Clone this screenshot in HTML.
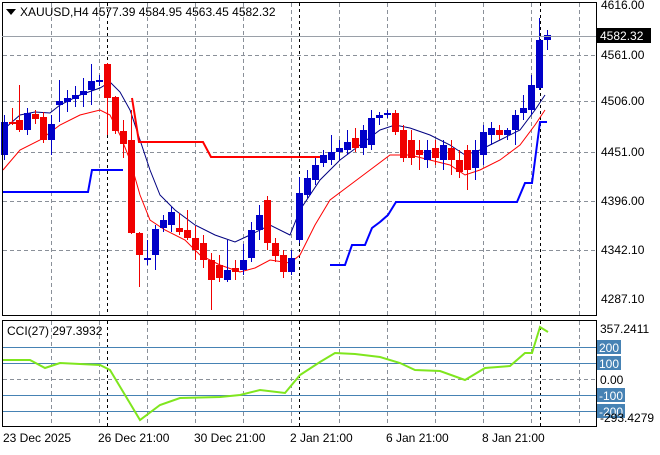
<!DOCTYPE html><html><head><style>
body{margin:0;background:#fff;width:660px;height:450px;overflow:hidden;font-family:"Liberation Sans",sans-serif}
svg text{font-family:"Liberation Sans",sans-serif;font-size:12px;fill:#000}
</style></head><body>
<svg id="s" width="660" height="450" xmlns="http://www.w3.org/2000/svg">
<rect x="0" y="0" width="660" height="450" fill="#fff"/>
<g id="grid" stroke="#8a9099" stroke-dasharray="4,3" stroke-width="1"></g>
<g id="sep" stroke="#000" stroke-dasharray="3,3" stroke-width="1"></g>
<g id="cci"></g>
<g id="main"></g>
<rect x="2.5" y="2.5" width="594" height="313" fill="none" stroke="#000"/>
<rect x="2.5" y="320.5" width="594" height="106" fill="none" stroke="#000"/>
<line x1="2" y1="36.5" x2="596" y2="36.5" stroke="#9aa0a8"/>
<polygon points="6,9 16,9 11,15" fill="#000"/>
<text x="20" y="16">XAUUSD,H4  4577.39 4584.95 4563.45 4582.32</text>
<text x="601" y="9">4616.00</text>
<rect x="597" y="28" width="54" height="15" fill="#000"/><text x="600" y="40" style="fill:#fff">4582.32</text>
<text x="601" y="59">4561.00</text>
<text x="601" y="105">4506.00</text>
<text x="601" y="156">4451.00</text>
<text x="601" y="205">4396.00</text>
<text x="601" y="254">4342.10</text>
<text x="601" y="303">4287.10</text>
<text x="7" y="335">CCI(27) 297.3932</text>
<text x="600" y="333">357.2411</text>
<rect x="597" y="340" width="24" height="14" fill="#4682b4"/><text x="599" y="352" style="fill:#fff">200</text>
<rect x="597" y="356" width="24" height="14" fill="#4682b4"/><text x="599" y="368" style="fill:#fff">100</text>
<text x="600" y="384">0.00</text>
<rect x="597" y="388" width="28" height="14" fill="#4682b4"/><text x="599" y="400" style="fill:#fff">-100</text>
<rect x="597" y="404" width="28" height="14" fill="#4682b4"/><text x="599" y="416" style="fill:#fff">-200</text>
<text x="600" y="422">-293.4279</text>
<text x="3" y="442">23 Dec 2025</text>
<text x="98" y="442">26 Dec 21:00</text>
<text x="194" y="442">30 Dec 21:00</text>
<text x="290" y="442">2 Jan 21:00</text>
<text x="386" y="442">6 Jan 21:00</text>
<text x="482" y="442">8 Jan 21:00</text>
</svg>
<script>
var N="http://www.w3.org/2000/svg";
function el(p,t,a){var e=document.createElementNS(N,t);for(var k in a)e.setAttribute(k,a[k]);document.getElementById(p).appendChild(e);return e;}
[55,101,152,201,250].forEach(function(y){el('grid','line',{x1:3,x2:596,y1:y+.5,y2:y+.5});});
for(var x=51;x<596;x+=48){el('grid','line',{x1:x+.5,x2:x+.5,y1:3,y2:315});el('grid','line',{x1:x+.5,x2:x+.5,y1:321,y2:426});}
el('grid','line',{x1:3,x2:596,y1:379.5,y2:379.5});
[107,299,540].forEach(function(x){el('sep','line',{x1:x+.5,x2:x+.5,y1:3,y2:315});el('sep','line',{x1:x+.5,x2:x+.5,y1:321,y2:426});});
[347,363,395,411].forEach(function(y){el('cci','line',{x1:3,x2:596,y1:y+.5,y2:y+.5,stroke:'#4682b4'});});
el('cci','polyline',{fill:'none',stroke:'#7fe61e','stroke-width':2,points:"3,360 30,360 45,368 60,363 100,365 110,370 125,395 140,420 160,405 180,398 220,397 240,395 260,390 285,393 300,375 320,362 335,353 355,354 380,357 400,363 415,370 440,371 465,380 485,368 510,366 525,353 532,353 540,327 548,332"});
el('main','polyline',{fill:'none',stroke:'#000080','stroke-width':1,points:"3,130 20,115 35,112 50,113 60,105 80,95 100,88 110,82 120,92 130,110 140,140 150,170 160,195 175,210 195,225 215,235 235,242 250,235 270,225 290,235 300,210 320,180 340,160 360,145 380,130 395,125 410,128 430,135 450,145 465,155 480,150 500,140 520,130 535,110 545,95"});
el('main','polyline',{fill:'none',stroke:'#f00','stroke-width':1,points:"3,170 20,150 40,140 60,125 80,115 100,110 110,115 120,135 130,160 140,195 150,220 165,230 185,240 200,255 220,265 240,272 255,268 270,260 290,263 300,255 315,225 330,200 350,185 370,170 390,155 410,155 430,160 450,165 465,175 480,170 500,160 520,145 535,125 545,110"});
el('main','polyline',{fill:'none',stroke:'#f00','stroke-width':2,points:"132,98 139,142 203,142 211,157 323,157"});
el('main','polyline',{fill:'none',stroke:'#00f','stroke-width':2,points:"3,192 88,192 92,170 123,170"});
el('main','polyline',{fill:'none',stroke:'#00f','stroke-width':2,points:"330,265 345,265 352,245 365,245 372,228 380,222 388,215 396,202 517,202 525,183 532,183 540,122 547,122"});
// x,color,high,low,bodyTop,bodyBot
var C=[[4,'b',115,160,122,155],[12,'r',108,125,122,124],[19,'r',85,132,120,130],[27,'b',108,135,113,130],[35,'r',110,124,114,119],[43,'r',112,143,117,140],[51,'b',115,155,124,140],[59,'b',80,122,101,105],[67,'b',90,112,98,102],[75,'b',86,107,95,99],[83,'b',78,107,91,95],[91,'b',64,105,81,90],[99,'b',75,86,80,82],[107,'r',63,135,64,98],[115,'r',96,134,97,131],[123,'r',120,158,131,144],[131,'r',110,234,140,233],[139,'r',232,287,233,255],[147,'b',240,265,258,260],[155,'b',225,270,229,255],[163,'b',215,232,220,228],[171,'b',207,232,212,225],[179,'r',213,235,228,232],[187,'r',210,240,230,238],[195,'r',226,260,238,250],[203,'r',235,268,243,260],[211,'r',253,310,260,280],[219,'r',255,282,265,278],[227,'b',240,282,270,280],[235,'r',260,280,268,272],[243,'b',244,275,260,270],[251,'b',222,262,230,258],[259,'b',205,240,215,230],[267,'r',196,250,200,243],[275,'r',238,262,243,256],[283,'r',250,278,255,272],[291,'b',250,275,258,272],[299,'b',177,243,193,240],[307,'b',170,198,178,195],[315,'b',158,185,165,180],[323,'b',150,167,155,163],[331,'b',135,165,152,160],[339,'b',140,160,148,152],[347,'b',130,155,142,150],[355,'r',128,152,138,148],[363,'b',125,155,130,148],[371,'b',110,150,118,145],[379,'b',112,125,115,118],[387,'b',110,118,113,115],[395,'r',110,135,113,132],[403,'r',125,162,130,158],[411,'r',130,165,140,158],[419,'r',140,170,150,155],[427,'b',140,168,150,160],[435,'r',140,165,148,158],[443,'b',140,170,145,160],[451,'r',140,175,148,160],[459,'r',150,178,160,172],[467,'r',145,190,150,170],[475,'b',140,180,150,168],[483,'b',125,165,132,155],[491,'b',122,145,128,135],[499,'r',125,140,130,135],[507,'b',128,140,130,135],[515,'b',110,145,115,130],[523,'b',95,120,108,113],[531,'b',75,115,85,110],[539,'b',18,90,40,88],[547,'b',30,50,35,40]];
C.forEach(function(c){var col=c[1]=='b'?'#0000c8':'#f00000';
el('main','line',{x1:c[0]+.5,x2:c[0]+.5,y1:c[2],y2:c[3],stroke:col});
el('main','rect',{x:c[0]-3,y:c[4],width:7,height:Math.max(1,c[5]-c[4]),fill:col});});
</script>
</body></html>
